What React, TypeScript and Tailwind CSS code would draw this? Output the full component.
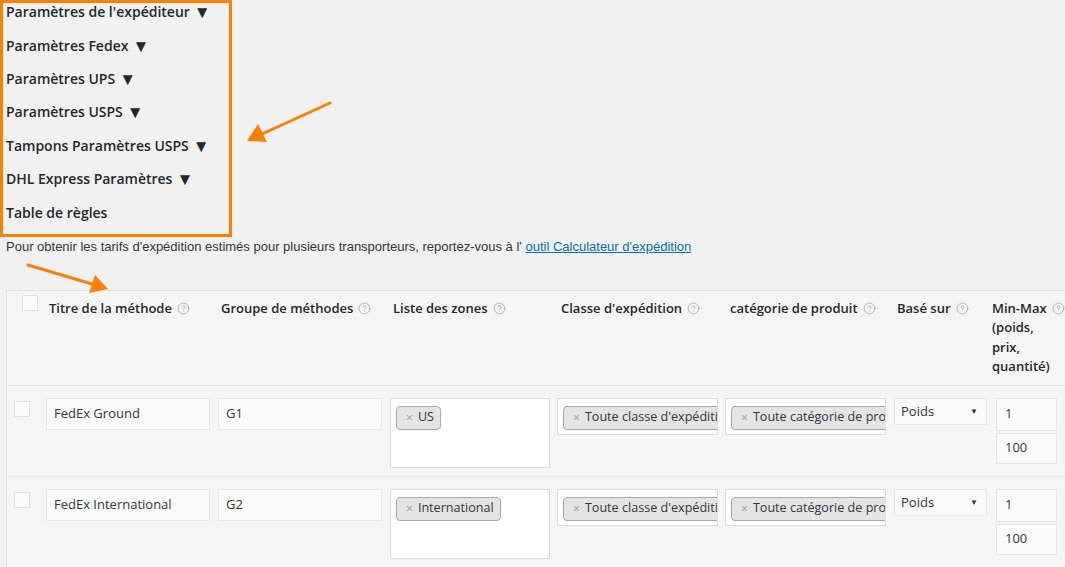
import { CircleHelp } from 'lucide-react';

const sections = [
  "Paramètres de l'expéditeur",
  'Paramètres Fedex',
  'Paramètres UPS',
  'Paramètres USPS',
  'Tampons Paramètres USPS',
  'DHL Express Paramètres',
];

type Rule = { title: string; group: string; zone: string };

const rules: Rule[] = [
  { title: 'FedEx Ground', group: 'G1', zone: 'US' },
  { title: 'FedEx International', group: 'G2', zone: 'International' },
];

const Help = () => (
  <CircleHelp size={13} strokeWidth={1.4} className="inline-block ml-[5px] -mt-[2px] text-[#a0a0a0] align-middle" />
);

const Tag = ({ label }: { label: string }) => (
  <span className="inline-flex items-center h-[24px] pl-[9px] pr-[6px] rounded-[4px] border border-[#aaa] bg-[#e4e4e4] whitespace-nowrap text-[12.6px] text-[#32373c]">
    <span className="text-[#999] text-[12px] mr-[5px]">×</span>
    {label}
  </span>
);

const Arrows = () => (
  <svg className="absolute inset-0 pointer-events-none" width="1065" height="567">
    <line x1="330" y1="103" x2="262" y2="134" stroke="#ff8000" strokeWidth="3" strokeLinecap="round" />
    <polygon points="247,141 258,124 267,142" fill="#ff8000" />
    <line x1="28" y1="265" x2="92" y2="284" stroke="#ff8000" strokeWidth="3" strokeLinecap="round" />
    <polygon points="108,289 89,293 95,275" fill="#ff8000" />
  </svg>
);

const RuleRow = ({ rule }: { rule: Rule }) => (
  <div className="grid grid-cols-[39px_172px_172px_167px_168px_169px_102px_80px] pt-[12px] pb-[8px] border-b border-[#e1e1e1]">
    <div className="pl-[7px] pt-[3px]">
      <div className="w-[16px] h-[16px] border border-[#e2e2e2] bg-[#fbfbfb]" />
    </div>
    <div className="w-[164px] h-[32px] border border-[#e6e6e6] bg-[#fbfbfb] pl-[7px] flex items-center text-[13px] text-[#32373c]">
      {rule.title}
    </div>
    <div className="w-[164px] h-[32px] border border-[#e6e6e6] bg-[#fbfbfb] pl-[7px] flex items-center text-[13px] text-[#32373c]">
      {rule.group}
    </div>
    <div className="w-[160px] h-[70px] border border-[#dcdcdc] bg-white pl-[5px] pt-[5px]">
      <Tag label={rule.zone} />
    </div>
    <div className="w-[161px] h-[37px] border border-[#dcdcdc] bg-white pl-[5px] pt-[5px] overflow-hidden">
      <Tag label="Toute classe d'expédition" />
    </div>
    <div className="w-[161px] h-[37px] border border-[#dcdcdc] bg-white pl-[5px] pt-[5px] overflow-hidden">
      <Tag label="Toute catégorie de produit" />
    </div>
    <div className="w-[93px] h-[27px] border border-[#e6e6e6] bg-[#fafafa] pl-[6px] pr-[8px] flex items-start justify-between text-[13px] text-[#32373c] pt-[3px]">
      <span>Poids</span>
      <span className="text-[8px] mt-[3px]">▼</span>
    </div>
    <div className="flex flex-col gap-[2px]">
      <div className="w-[61px] h-[33px] border border-[#e6e6e6] bg-[#fbfbfb] pl-[8px] flex items-center text-[13px] text-[#32373c]">1</div>
      <div className="w-[61px] h-[31px] border border-[#e6e6e6] bg-[#fbfbfb] pl-[8px] flex items-center text-[13px] text-[#32373c]">100</div>
    </div>
  </div>
);

export default function App() {
  return (
    <div className="relative w-[1065px] h-[567px] overflow-hidden bg-[#f1f1f1] font-['Open_Sans','Noto_Sans',sans-serif] text-[#23282d]">
      <div className="w-[232px] h-[237px] border-[3px] border-[#ff8000] pl-[3px]">
        <div className="flex flex-col -mt-[8px]">
          {sections.map((s) => (
            <div key={s} className="h-[33.4px] flex items-center text-[14px] font-semibold">
              <span>{s}</span>
              <span className="ml-[4px] text-[17px] leading-none">▼</span>
            </div>
          ))}
          <div className="h-[33.4px] flex items-center text-[14px] font-semibold">Table de règles</div>
        </div>
      </div>

      <p className="pl-[6px] text-[13px] text-[#32373c] font-['Liberation_Sans',sans-serif]">
        Pour obtenir les tarifs d'expédition estimés pour plusieurs transporteurs, reportez-vous à l'{' '}
        <a href="#" className="text-[#0073aa] underline">outil Calculateur d'expédition</a>
      </p>

      <div className="ml-[6px] mt-[33px] w-[1100px] border border-[#e1e1e1] bg-[#f5f5f5]">
        <div className="grid grid-cols-[42px_172px_172px_168px_169px_167px_95px_90px] pt-[8px] pb-[8px] border-b border-[#e1e1e1] text-[13px] font-semibold leading-[19.5px] text-[#23282d]">
          <div className="pl-[15px] -mt-[4px]">
            <div className="w-[16px] h-[16px] border border-[#e2e2e2] bg-[#fbfbfb]" />
          </div>
          <div>Titre de la méthode<Help /></div>
          <div>Groupe de méthodes<Help /></div>
          <div>Liste des zones<Help /></div>
          <div>Classe d'expédition<Help /></div>
          <div>catégorie de produit<Help /></div>
          <div>Basé sur<Help /></div>
          <div>
            Min-Max<Help /><br />(poids,<br />prix,<br />quantité)
          </div>
        </div>
        {rules.map((r) => (
          <RuleRow key={r.title} rule={r} />
        ))}
      </div>

      <Arrows />
    </div>
  );
}
